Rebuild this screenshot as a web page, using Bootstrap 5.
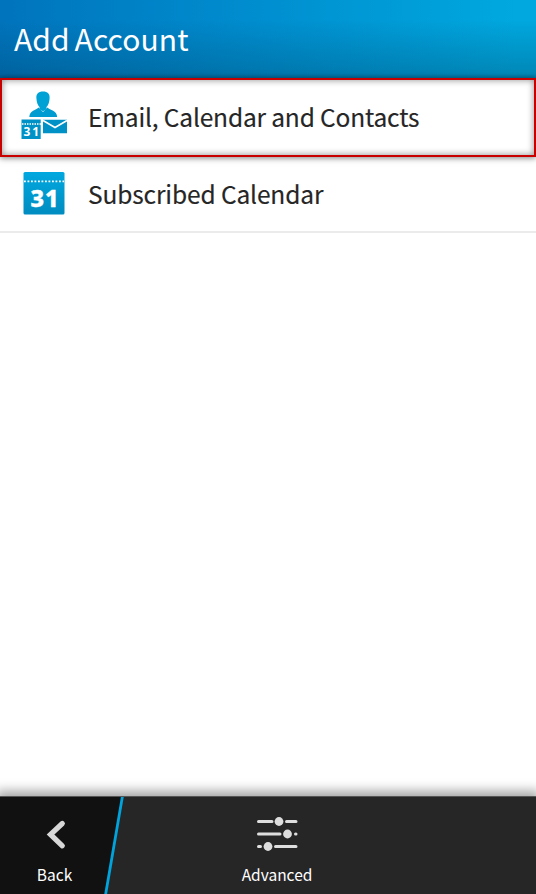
<!DOCTYPE html>
<html lang="en">
<head>
<meta charset="utf-8">
<meta name="viewport" content="width=device-width, initial-scale=1">
<title>Add Account</title>
<link href="https://cdn.jsdelivr.net/npm/bootstrap@5.3.0/dist/css/bootstrap.min.css" rel="stylesheet">
<style>
body{font-family:"Noto Sans CJK SC","Noto Sans",sans-serif;color:#262626;background:#fff;overflow:hidden}
.title-bar{height:78px;padding:0 14px 2px;background:linear-gradient(180deg,rgba(0,50,90,0) 25%,rgba(0,60,90,.29) 94%,rgba(0,50,80,.42) 100%),linear-gradient(90deg,#0074bd,#008fd0 50%,#00a8df 96%)}
.title-bar h1{font-size:30px;line-height:40px;color:#fff;font-weight:400;letter-spacing:.1px;word-spacing:-2px}
.account{height:76px;padding:0 20px 2px;border-bottom:2px solid #ebebeb;font-size:24.5px;line-height:34px;letter-spacing:-.12px;color:#262626;-webkit-text-stroke:.15px #262626}
.account svg{width:48px;height:50px;margin-right:20px;-webkit-text-stroke:0}
.account span{padding-top:2px}
.account.picked{height:79px;border:2px solid #c80000;padding:0 18px 3px;letter-spacing:-.16px;box-shadow:0 1px 6px rgba(0,0,0,.5),inset 0 0 7px rgba(0,0,0,.45)}
.action-bar{height:98px;background:#262626;border-top:1px solid #555;box-shadow:0 -1px 11px 4px rgba(0,0,0,.36);font-size:15.5px;line-height:20px;color:#fff}
.back-bg{position:absolute;inset:0;width:125px;height:97px}
.action{padding-top:17px}
.action svg{display:block;width:44px;height:42px;margin-bottom:8px}
.back-action{width:109px}
.advanced-action{width:304px}
</style>
<script src="https://cdn.jsdelivr.net/npm/bootstrap@5.3.0/dist/js/bootstrap.bundle.min.js"></script>
</head>
<body>
<svg width="0" height="0" class="position-absolute"><defs><linearGradient id="blue" x2="0" y2="1"><stop stop-color="#00a8df"/><stop offset="1" stop-color="#008cc0"/></linearGradient></defs></svg>
<div class="d-flex flex-column vh-100">
  <header class="title-bar d-flex align-items-center flex-shrink-0"><h1 class="m-0">Add Account</h1></header>
  <main class="flex-grow-1">
    <a href="#" class="account picked d-flex align-items-center text-decoration-none">
      <svg viewBox="20 91 48 50"><path fill="#00a2d6" d="M43 91.500c4.700 0 6.900 2.300 6.600 6.700-.2 4-1.300 7-3.100 8.800v2.300L43 111.200l-3.500-1.900V107c-1.800-1.800-2.900-4.800-3.100-8.800-.3-4.400 1.900-6.700 6.600-6.700z"/><path fill="#009bd0" d="M38.500 107.600 43 112.100l4.500-4.500c2.500 2.800 9.300 2.500 9.700 9.400H29.300c.4-6.900 6.700-6.600 9.200-9.400z"/><path fill="#0092c6" d="M21.500 119.500h19.200V139H21.500zM43 119.700h24v13.600H43z"/><path d="M22 124h19" stroke="#fff" stroke-width="1.500" stroke-dasharray="1.500 1"/><path d="m43 120.500 12 7 12-7" fill="none" stroke="#fff" stroke-width="1.600"/><text x="23.500" y="135.800" textLength="15.500" font-family="Noto Sans" font-weight="700" font-size="12" fill="#fff">31</text></svg>
      <span>Email, Calendar and Contacts</span>
    </a>
    <a href="#" class="account d-flex align-items-center text-decoration-none">
      <svg viewBox="20 168 48 50"><rect x="23.500" y="172" width="41" height="42.500" rx="1.500" fill="url(#blue)"/><path d="M24 181.300h40" stroke="#fff" stroke-width="1.800" stroke-dasharray="1.800 1.700"/><text x="30.500" y="206.500" textLength="28" font-family="Noto Sans" font-weight="800" font-size="23.500" fill="#fff" stroke="#fff" stroke-width=".4">31</text></svg>
      <span>Subscribed Calendar</span>
    </a>
  </main>
  <footer class="action-bar position-relative d-flex flex-shrink-0">
    <svg class="back-bg" viewBox="0 0 125 97"><path d="M0 0h122l-16 97H0z" fill="#111"/><path d="m122.500-1-17 99" stroke="#00a3dc" stroke-width="2.800"/></svg>
    <div class="action back-action position-relative d-flex flex-column align-items-center">
      <svg viewBox="33 814 44 42"><path d="M62.300 823.500 50.500 834.500l11.800 11.300" fill="none" stroke="#d7d7d7" stroke-width="5.200" stroke-linecap="round"/></svg><span>Back</span>
    </div>
    <div class="action advanced-action ms-3 d-flex flex-column align-items-center">
      <svg viewBox="255 814 44 42"><g stroke="#dedede" stroke-width="3" stroke-linecap="round"><path d="M258.500 821.500H272M286.500 821.500H296M258.500 834H280M295.500 834h.5M258.500 846.500h2M275.500 846.500H296"/></g><g fill="#dedede"><circle cx="279" cy="821.500" r="4.400"/><circle cx="287.500" cy="834" r="4.400"/><circle cx="268" cy="846.500" r="4.400"/></g></svg><span>Advanced</span>
    </div>
  </footer>
</div>
</body>
</html>
